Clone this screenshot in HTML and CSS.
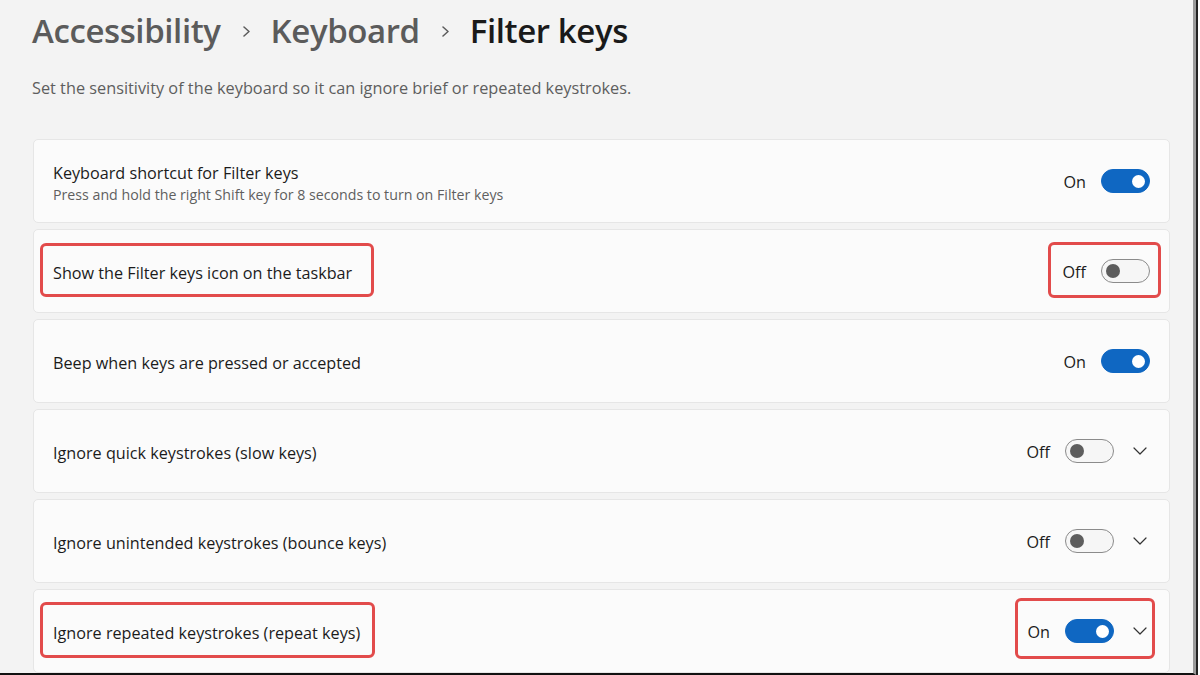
FILE: index.html
```html
<!DOCTYPE html>
<html>
<head>
<meta charset="utf-8">
<link rel="stylesheet" href="styles.css">
</head>
<body>
<div class="frame">
  <div class="page">
    <h1 class="crumbs">
      <span class="crumb">Accessibility</span>
      <svg class="sep" width="9" height="11" viewBox="0 0 9 11"><path d="M2 1 L7 5.5 L2 10" fill="none" stroke="#5b5b5b" stroke-width="1.5" stroke-linecap="round" stroke-linejoin="round"/></svg>
      <span class="crumb">Keyboard</span>
      <svg class="sep" width="9" height="11" viewBox="0 0 9 11"><path d="M2 1 L7 5.5 L2 10" fill="none" stroke="#5b5b5b" stroke-width="1.5" stroke-linecap="round" stroke-linejoin="round"/></svg>
      <span class="crumb current">Filter keys</span>
    </h1>
    <p class="desc">Set the sensitivity of the keyboard so it can ignore brief or repeated keystrokes.</p>
    <div class="list">
      <div class="card">
        <div class="text">
          <div class="label">Keyboard shortcut for Filter keys</div>
          <div class="sub">Press and hold the right Shift key for 8 seconds to turn on Filter keys</div>
        </div>
        <div class="ctrl">
          <span class="state">On</span>
          <span class="toggle on"><span class="knob"></span></span>
        </div>
      </div>
      <div class="card">
        <div class="text"><div class="label">Show the Filter keys icon on the taskbar</div></div>
        <div class="ctrl">
          <span class="state">Off</span>
          <span class="toggle"><span class="knob"></span></span>
        </div>
        <span class="mark m1"></span>
        <span class="mark m2"></span>
      </div>
      <div class="card">
        <div class="text"><div class="label">Beep when keys are pressed or accepted</div></div>
        <div class="ctrl">
          <span class="state">On</span>
          <span class="toggle on"><span class="knob"></span></span>
        </div>
      </div>
      <div class="card expand">
        <div class="text"><div class="label">Ignore quick keystrokes (slow keys)</div></div>
        <div class="ctrl">
          <span class="state">Off</span>
          <span class="toggle"><span class="knob"></span></span>
          <svg class="chev" width="14" height="8" viewBox="0 0 14 8"><path d="M1 1 L7 7 L13 1" fill="none" stroke="#333" stroke-width="1.2" stroke-linecap="round" stroke-linejoin="round"/></svg>
        </div>
      </div>
      <div class="card expand">
        <div class="text"><div class="label">Ignore unintended keystrokes (bounce keys)</div></div>
        <div class="ctrl">
          <span class="state">Off</span>
          <span class="toggle"><span class="knob"></span></span>
          <svg class="chev" width="14" height="8" viewBox="0 0 14 8"><path d="M1 1 L7 7 L13 1" fill="none" stroke="#333" stroke-width="1.2" stroke-linecap="round" stroke-linejoin="round"/></svg>
        </div>
      </div>
      <div class="card expand">
        <div class="text"><div class="label">Ignore repeated keystrokes (repeat keys)</div></div>
        <div class="ctrl">
          <span class="state">On</span>
          <span class="toggle on"><span class="knob"></span></span>
          <svg class="chev" width="14" height="8" viewBox="0 0 14 8"><path d="M1 1 L7 7 L13 1" fill="none" stroke="#333" stroke-width="1.2" stroke-linecap="round" stroke-linejoin="round"/></svg>
        </div>
        <span class="mark m3"></span>
        <span class="mark m4"></span>
      </div>
    </div>
  </div>
</div>
</body>
</html>
```
FILE: styles.css
```css
html, body {
  margin: 0;
  padding: 0;
  background: #ffffff;
}
body {
  font-family: "Open Sans", "Noto Sans", "Liberation Sans", sans-serif;
  color: #1b1b1b;
}
.frame {
  width: 1193px;
  height: 673px;
  overflow: hidden;
  background: #f3f3f3;
  border-right: 3px solid #9a9a9a;
  border-bottom: 2px solid #111;
  box-shadow: 2px 0 0 #222;
}
.page {
  padding: 0 23px 0 32px;
}
.crumbs {
  margin: 0;
  padding-top: 9px;
  height: 44px;
  display: flex;
  align-items: center;
  font-size: 33px;
  font-weight: 600;
  line-height: 44px;
  letter-spacing: -0.4px;
  color: #5b5b5b;
}
.sep {
  margin: 0 20px 0 21px;
}
.current {
  color: #1a1a1a;
}
.desc {
  margin: 20px 0 0 0;
  font-size: 16.3px;
  line-height: 30px;
  color: #5e5e5e;
}
.list {
  margin-top: 36px;
  margin-left: 1px;
  display: flex;
  flex-direction: column;
  gap: 6px;
}
.card {
  position: relative;
  height: 84px;
  box-sizing: border-box;
  background: #fbfbfb;
  border: 1px solid #e6e6e6;
  border-radius: 5px;
  display: flex;
  align-items: center;
  justify-content: space-between;
  padding: 0 19px 0 19px;
}
.text {
  padding-top: 5px;
}
.label {
  font-size: 16.2px;
  line-height: 21px;
  color: #1b1b1b;
}
.sub {
  font-size: 14.2px;
  line-height: 21px;
  color: #5f5f5f;
}
.ctrl {
  display: flex;
  align-items: center;
}
.state {
  font-size: 16.2px;
  color: #1b1b1b;
  margin-right: 15px;
  padding-top: 2px;
}
.toggle {
  width: 49px;
  height: 24px;
  box-sizing: border-box;
  border-radius: 12px;
  border: 1px solid #8b8b8b;
  background: #f6f6f6;
  display: flex;
  align-items: center;
  padding: 0 4px;
}
.knob {
  width: 14px;
  height: 14px;
  border-radius: 50%;
  background: #5d5d5d;
}
.toggle.on {
  background: #0f67c2;
  border-color: #0f67c2;
  justify-content: flex-end;
}
.toggle.on .knob {
  background: #ffffff;
  width: 13px;
  height: 13px;
}
.chev {
  margin-left: 19px;
  margin-right: 3px;
}
.mark {
  position: absolute;
  border: 3px solid #e24b4b;
  border-radius: 6px;
  box-sizing: border-box;
}
.m1 { left: 6px; top: 13px; width: 334px; height: 54px; }
.m2 { right: 8px; top: 12px; width: 113px; height: 56px; }
.m3 { left: 6px; top: 12px; width: 335px; height: 56px; }
.m4 { right: 14px; top: 8px; width: 140px; height: 61px; }
```
